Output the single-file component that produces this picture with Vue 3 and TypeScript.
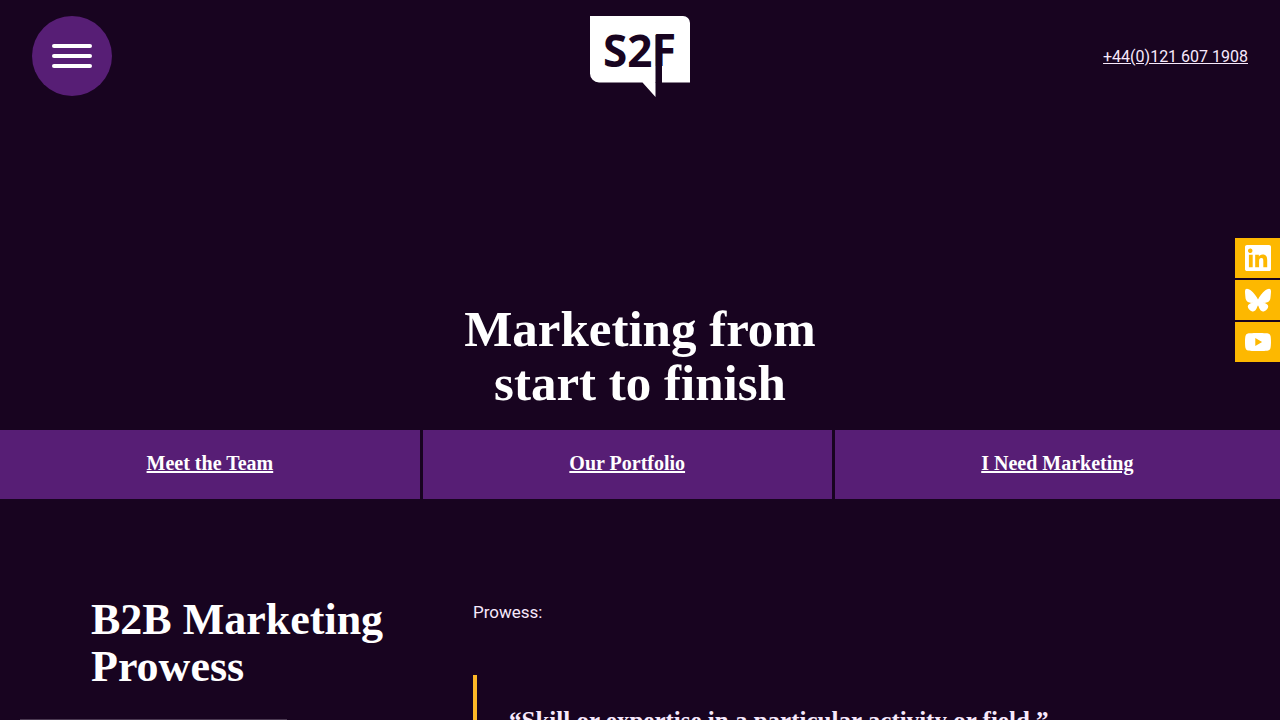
<script setup lang="ts">
interface LinkItem {
  label: string
  href: string
}

interface SocialItem extends LinkItem {
  path: string
}

const actions: LinkItem[] = [
  { label: 'Meet the Team', href: '#team' },
  { label: 'Our Portfolio', href: '#portfolio' },
  { label: 'I Need Marketing', href: '#contact' },
]

const socials: SocialItem[] = [
  {
    label: 'LinkedIn',
    href: '#linkedin',
    path: 'M22.2 0H1.8C.8 0 0 .8 0 1.7v20.6c0 .9.8 1.7 1.8 1.7h20.4c1 0 1.8-.8 1.8-1.7V1.7C24 .8 23.2 0 22.2 0zM7.1 20.5H3.6V9h3.500v11.5zM5.3 7.4a2.1 2.1 0 1 1 0-4.1 2.1 2.1 0 0 1 0 4.1zM20.5 20.5h-3.6v-5.6c0-1.3 0-3-1.8-3s-2.1 1.4-2.1 2.9v5.7H9.4V9h3.4v1.6c.5-.9 1.6-1.9 3.4-1.9 3.6 0 4.3 2.4 4.3 5.5v6.3z',
  },
  {
    label: 'Bluesky',
    href: '#bluesky',
    path: 'M5.2 3C7.95 5.100 10.9 9.25 12 11.500c1.1-2.25 4.05-6.4 6.8-8.5C20.8 1.500 24 .35 24 4.050c0 .75-.4 6.2-.65 7.1-.85 3.1-3.9 3.85-6.6 3.4 4.75.8 5.95 3.45 3.35 6.15-4.95 5.05-7.1-1.3-7.65-2.9-.1-.3-.3-.7-.45-.7s-.35.4-.45.7c-.55 1.6-2.7 7.95-7.65 2.9-2.6-2.7-1.4-5.35 3.35-6.15-2.7.45-5.75-.3-6.6-3.4C.4 10.250 0 4.800 0 4.050 0 .35 3.2 1.500 5.2 3z',
  },
  {
    label: 'YouTube',
    href: '#youtube',
    path: 'M23.5 6.2a3 3 0 0 0-2.1-2.1C19.5 3.6 12 3.6 12 3.6s-7.5 0-9.4.5A3 3 0 0 0 .5 6.2C0 8.1 0 12 0 12s0 3.9.5 5.8a3 3 0 0 0 2.1 2.1c1.9.5 9.4.5 9.4.5s7.5 0 9.4-.5a3 3 0 0 0 2.1-2.1c.5-1.9.5-5.8.5-5.8s0-3.9-.5-5.8zM9.5 15.6V8.400l6.3 3.6-6.3 3.6z',
  },
]
</script>

<template>
  <div class="page">
    <header class="header">
      <div class="side">
        <button class="menu" type="button" aria-label="Menu">
          <span class="bar"></span>
          <span class="bar"></span>
          <span class="bar"></span>
        </button>
      </div>
      <a class="logo" href="#home" aria-label="S2F">
        <svg viewBox="0 0 100 82" width="100" height="82">
          <path class="bubble" d="M0 0H93a7 7 0 0 1 7 7V66.500H65.500V81L52.500 66.500H9a9 9 0 0 1-9-9z" />
          <path class="stem" d="M65.500 19H72V67H65.500z" />
          <text class="letters" x="13" y="51">S2</text>
          <text class="letters" x="62" y="50">F</text>
        </svg>
      </a>
      <div class="side end">
        <a class="phone" href="tel:+441216071908">+44(0)121 607 1908</a>
      </div>
    </header>

    <main>
      <section class="hero">
        <h1>Marketing from<br />start to finish</h1>
      </section>

      <nav class="actions">
        <a v-for="item in actions" :key="item.href" :href="item.href">{{ item.label }}</a>
      </nav>

      <section class="intro">
        <h2>B2B Marketing Prowess</h2>
        <div class="copy">
          <p>Prowess:</p>
          <blockquote>“Skill or expertise in a particular activity or field.”</blockquote>
        </div>
      </section>
    </main>

    <aside class="socials">
      <a v-for="item in socials" :key="item.href" :href="item.href" :aria-label="item.label">
        <svg viewBox="0 0 24 24" width="26" height="26"><path :d="item.path" /></svg>
      </a>
    </aside>

    <div class="status"></div>
  </div>
</template>

<style>
body {
  margin: 0;
  background: #180420;
}
</style>

<style scoped>
.page {
  min-height: 100vh;
  background: #180420;
  color: #fff;
  font-family: Roboto, "Liberation Sans", sans-serif;
  font-size: 16px;
  line-height: 24px;
}

a {
  color: inherit;
}

.header {
  display: flex;
  align-items: flex-start;
  padding: 16px 32px 0;
}

.side {
  display: flex;
  flex: 1;
  align-items: center;
}

.end {
  justify-content: flex-end;
  min-height: 82px;
}

.menu {
  display: flex;
  flex-direction: column;
  align-items: center;
  justify-content: center;
  gap: 6px;
  width: 80px;
  height: 80px;
  padding: 0;
  border: 0;
  border-radius: 50%;
  background: #571e75;
  cursor: pointer;
}

.bar {
  width: 40px;
  height: 4px;
  border-radius: 2px;
  background: #fff;
}

.logo svg {
  display: block;
}

.bubble {
  fill: #fff;
}

.stem,
.letters {
  fill: #180420;
}

.letters {
  font-family: "Open Sans", "Noto Sans", sans-serif;
  font-size: 44px;
  font-weight: 700;
}

.phone {
  color: #f7e9fc;
}

h1,
h2,
.actions,
blockquote {
  font-family: "Liberation Serif", serif;
  font-weight: 700;
}

.hero {
  padding: 204px 20px 20px;
  text-align: center;
}

h1 {
  margin: 0;
  font-size: 51px;
  line-height: 54px;
}

.actions {
  display: flex;
  gap: 3px;
  font-size: 20px;
  line-height: 25px;
}

.actions a {
  flex: 1 1 auto;
  padding: 21px 0 23px;
  background: #571e75;
  text-align: center;
  text-decoration-thickness: 2px;
}

.intro {
  display: grid;
  grid-template-columns: 350px 1fr;
  gap: 32px;
  padding: 97px 91px 48px;
}

h2 {
  margin: 0;
  font-size: 44px;
  line-height: 47px;
}

.copy {
  padding-top: 4px;
}

p {
  margin: 0;
  color: #f7e9fc;
  font-size: 17px;
}

blockquote {
  margin: 51px 0 0;
  padding: 32px;
  border-left: 4px solid #fdb827;
  color: #f7e9fc;
  font-size: 25px;
  line-height: 28px;
}

.socials {
  position: fixed;
  top: 238px;
  right: 0;
  display: flex;
  flex-direction: column;
  gap: 2px;
}

.socials a {
  display: flex;
  align-items: center;
  justify-content: center;
  width: 45px;
  height: 40px;
  background: #fdb800;
}

.socials path {
  fill: #fff;
}

.status {
  position: fixed;
  bottom: 0;
  left: 20px;
  width: 267px;
  height: 1px;
  background: #4b3a52;
}
</style>
